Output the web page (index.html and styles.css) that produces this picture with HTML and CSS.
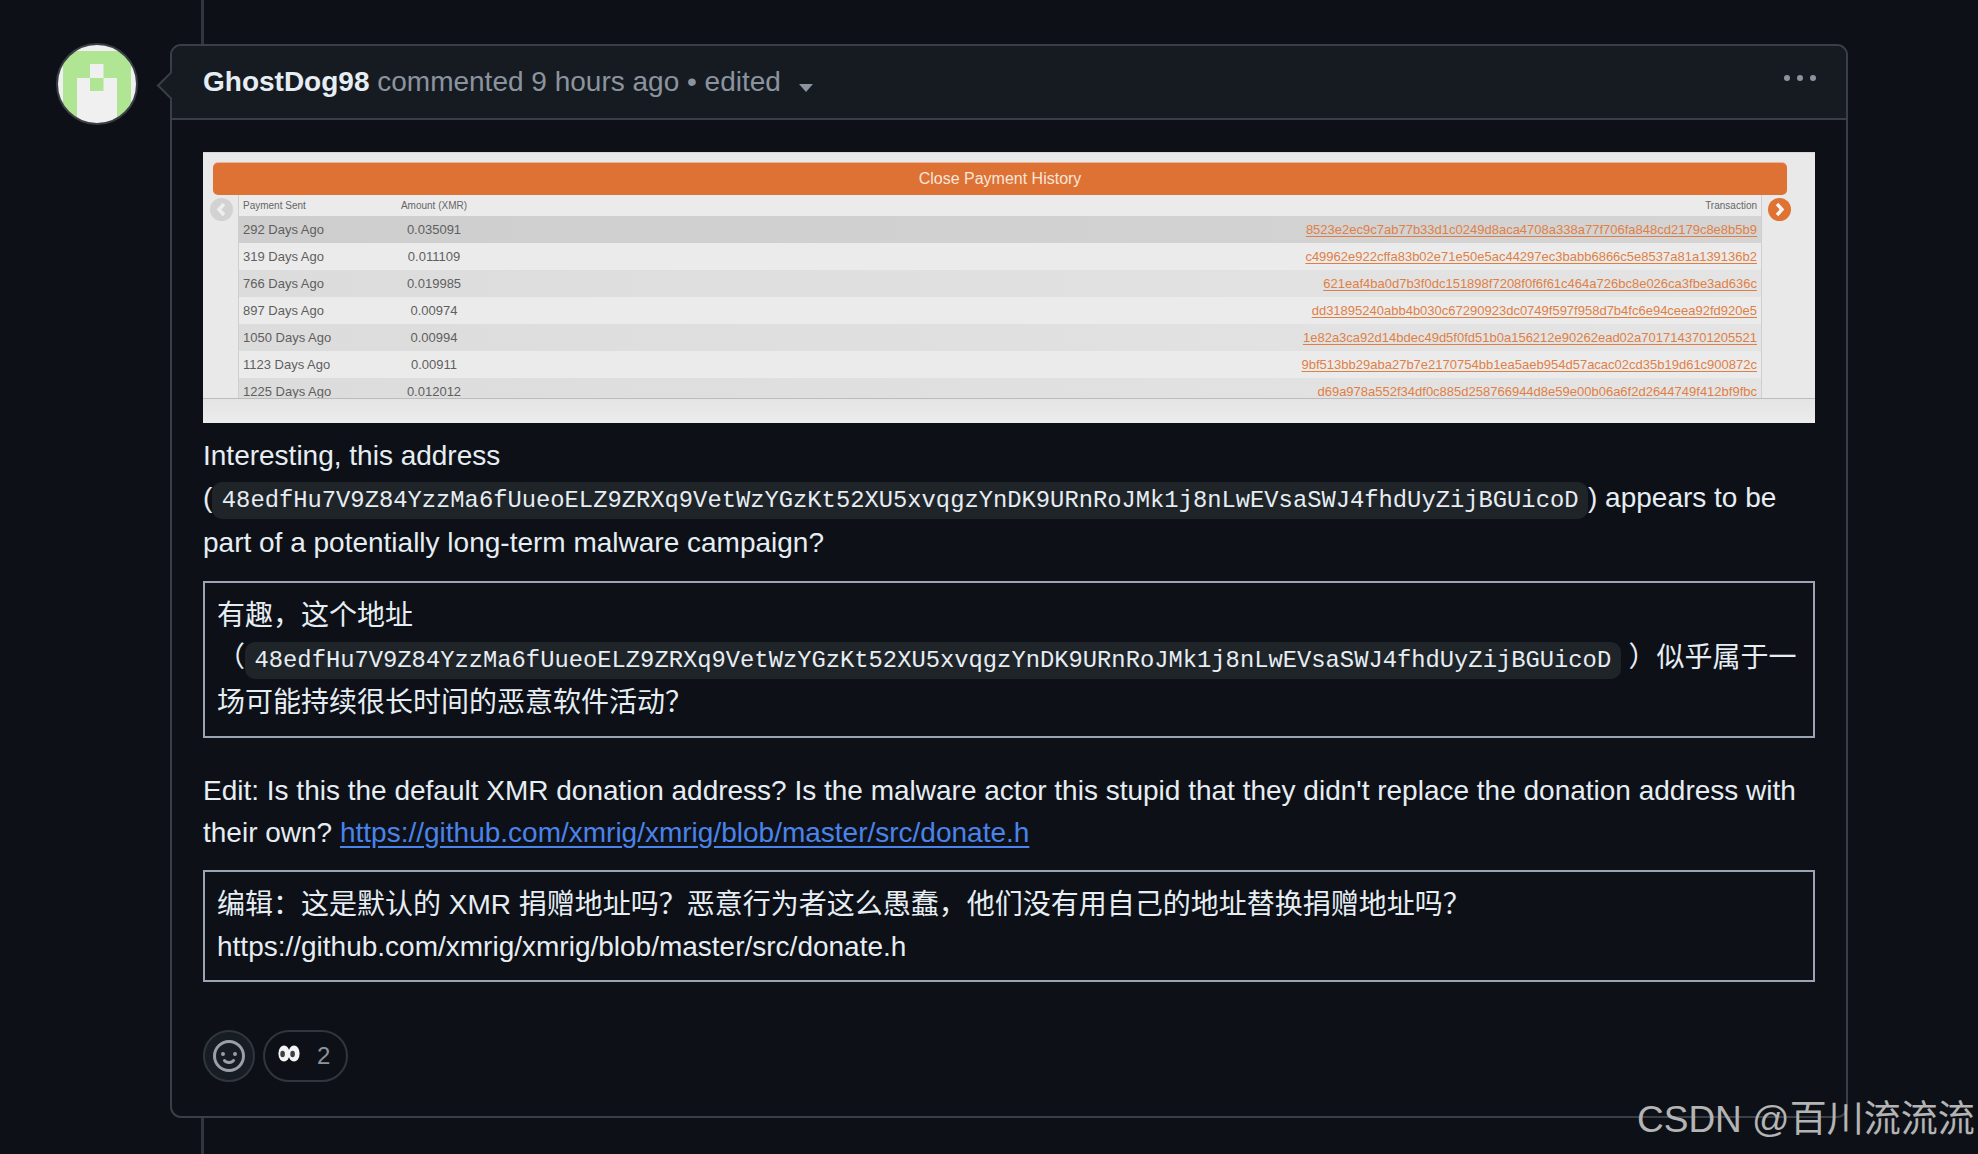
FILE: index.html
```html
<!DOCTYPE html>
<html lang="en">
<head>
<meta charset="utf-8">
<title>Comment</title>
<link rel="stylesheet" href="styles.css">
</head>
<body>
<div class="page">
  <svg class="avatar" viewBox="0 0 82 82" aria-hidden="true">
    <defs><clipPath id="round"><circle cx="41" cy="41" r="40"/></clipPath></defs>
    <g clip-path="url(#round)">
      <rect width="82" height="82" fill="#f0f0f0"/>
      <rect x="7" y="8" width="68" height="74" fill="#b0e594"/>
      <rect x="21" y="35" width="40" height="47" fill="#f0f0f0"/>
      <rect x="34" y="21" width="13.5" height="14" fill="#f0f0f0"/>
      <rect x="34" y="35" width="13.5" height="13" fill="#b0e594"/>
    </g>
    <circle cx="41" cy="41" r="40" fill="none" stroke="#3a3f47" stroke-width="2"/>
  </svg>
  <article class="card">
    <header class="card-head">
      <h3 class="head-text"><strong class="author">GhostDog98</strong> commented 9 hours ago • edited <span class="caret"></span></h3>
      <div class="dots"><i></i><i></i><i></i></div>
    </header>
    <div class="card-body">
      <div class="shot">
        <div class="shot-bar">Close Payment History</div>
        <div class="shot-main">
          <div class="shot-side">
            <svg class="nav" viewBox="0 0 23 23"><circle cx="11.5" cy="11.5" r="11.5" fill="#d2d2d2"/><path d="M14 6l-5 5.500 5 5.500" fill="none" stroke="#efefef" stroke-width="3.400"/></svg>
          </div>
          <div class="shot-table">
            <div class="row row-head"><span>Payment Sent</span><span class="amt">Amount (XMR)</span><span class="tx">Transaction</span></div>
            <div class="row row-a"><span>292 Days Ago</span><span class="amt">0.035091</span><a class="tx">8523e2ec9c7ab77b33d1c0249d8aca4708a338a77f706fa848cd2179c8e8b5b9</a></div>
            <div class="row"><span>319 Days Ago</span><span class="amt">0.011109</span><a class="tx">c49962e922cffa83b02e71e50e5ac44297ec3babb6866c5e8537a81a139136b2</a></div>
            <div class="row row-b"><span>766 Days Ago</span><span class="amt">0.019985</span><a class="tx">621eaf4ba0d7b3f0dc151898f7208f0f6f61c464a726bc8e026ca3fbe3ad636c</a></div>
            <div class="row"><span>897 Days Ago</span><span class="amt">0.00974</span><a class="tx">dd31895240abb4b030c67290923dc0749f597f958d7b4fc6e94ceea92fd920e5</a></div>
            <div class="row row-b"><span>1050 Days Ago</span><span class="amt">0.00994</span><a class="tx">1e82a3ca92d14bdec49d5f0fd51b0a156212e90262ead02a7017143701205521</a></div>
            <div class="row"><span>1123 Days Ago</span><span class="amt">0.00911</span><a class="tx">9bf513bb29aba27b7e2170754bb1ea5aeb954d57acac02cd35b19d61c900872c</a></div>
            <div class="row row-b"><span>1225 Days Ago</span><span class="amt">0.012012</span><a class="tx">d69a978a552f34df0c885d258766944d8e59e00b06a6f2d2644749f412bf9fbc</a></div>
          </div>
          <div class="shot-side shot-side-r">
            <svg class="nav" viewBox="0 0 23 23"><circle cx="11.500" cy="11.500" r="11.500" fill="#e07232"/><path d="M9 6l5 5.500-5 5.500" fill="none" stroke="#f5f5f5" stroke-width="3.400"/></svg>
          </div>
        </div>
        <div class="shot-foot"></div>
      </div>

      <p class="para para-first">Interesting, this address (<code>48edfHu7V9Z84YzzMa6fUueoELZ9ZRXq9VetWzYGzKt52XU5xvqgzYnDK9URnRoJMk1j8nLwEVsaSWJ4fhdUyZijBGUicoD</code>) appears to be part of a potentially long-term malware campaign?</p>
      <div class="tbox" lang="zh-CN">有趣，这个地址（<code>48edfHu7V9Z84YzzMa6fUueoELZ9ZRXq9VetWzYGzKt52XU5xvqgzYnDK9URnRoJMk1j8nLwEVsaSWJ4fhdUyZijBGUicoD</code> ）似乎属于一场可能持续很长时间的恶意软件活动？</div>
      <p class="para para-second">Edit: Is this the default XMR donation address? Is the malware actor this stupid that they didn't replace the donation address with their own? <a class="link" href="#">https://github.com/xmrig/xmrig/blob/master/src/donate.h</a></p>
      <div class="tbox" lang="zh-CN">编辑：这是默认的 XMR 捐赠地址吗？恶意行为者这么愚蠢，他们没有用自己的地址替换捐赠地址吗？<br>https://github.com/xmrig/xmrig/blob/master/src/donate.h</div>

      <div class="reactions">
        <button class="react-add" aria-label="Add reaction">
          <svg class="smile" viewBox="0 0 16 16"><path d="M8 0a8 8 0 1 1 0 16A8 8 0 0 1 8 0ZM1.500 8a6.500 6.500 0 1 0 13 0 6.500 6.500 0 0 0-13 0Zm3.820 1.636a.75.75 0 0 1 1.038.175l.007.009c.103.118.22.222.35.31.264.178.683.37 1.285.37.602 0 1.020-.192 1.285-.371.13-.088.247-.192.35-.31l.007-.008a.75.75 0 0 1 1.222.87l-.022-.015c.02.013.021.015.021.015v.001l-.001.002-.002.003-.005.007-.014.019a2.066 2.066 0 0 1-.184.213c-.16.166-.338.316-.53.445-.63.418-1.370.638-2.127.629-.946 0-1.652-.308-2.126-.63a3.331 3.331 0 0 1-.715-.657l-.014-.02-.005-.006-.002-.003v-.002h-.001l.613-.432-.614.43a.75.75 0 0 1 .183-1.044ZM12 7a1 1 0 1 1-2 0 1 1 0 0 1 2 0ZM5 8a1 1 0 1 1 0-2 1 1 0 0 1 0 2Z"/></svg>
        </button>
        <button class="react-pill">
          <svg class="eyes" viewBox="0 0 22 17"><ellipse cx="6" cy="8.500" rx="5.600" ry="8" fill="#f4f4f4"/><ellipse cx="16" cy="8.500" rx="5.600" ry="8" fill="#f4f4f4"/><ellipse cx="4.600" cy="9" rx="2.300" ry="3.300" fill="#3c3f44"/><ellipse cx="14.600" cy="9" rx="2.300" ry="3.300" fill="#3c3f44"/></svg>
          <span class="count">2</span>
        </button>
      </div>
    </div>
  </article>
  <div class="watermark" lang="zh-CN">CSDN @百川流流流</div>
</div>
</body>
</html>
```
FILE: styles.css
```css
* { box-sizing: border-box; }
html, body { margin: 0; padding: 0; }
body {
  background: #0d1117;
  color: #e6edf3;
  font-family: "Liberation Sans", "Noto Sans CJK SC", sans-serif;
  font-size: 28px;
  line-height: 42px;
}
.page {
  position: relative;
  height: 1154px;
  overflow: hidden;
  display: flex;
  align-items: flex-start;
  padding: 43px 0 0 56px;
}
.page::before {
  content: "";
  position: absolute;
  left: 201px;
  top: 0;
  bottom: 0;
  width: 3px;
  background: #30363d;
}
.avatar { width: 82px; height: 82px; flex: none; }
.card {
  position: relative;
  width: 1678px;
  margin: 1px 0 0 32px;
  background: #0d1117;
  border: 2px solid #3a3f47;
  border-radius: 11px;
}
.card::before {
  content: "";
  position: absolute;
  left: -11px;
  top: 29px;
  width: 19px;
  height: 19px;
  background: #161b22;
  border-left: 2px solid #3a3f47;
  border-bottom: 2px solid #3a3f47;
  transform: rotate(45deg);
}
.card-head {
  position: relative;
  height: 74px;
  padding: 0 31px;
  display: flex;
  align-items: center;
  justify-content: space-between;
  background: #161b22;
  border-bottom: 2px solid #3a3f47;
  border-radius: 9px 9px 0 0;
}
.head-text {
  margin: 0;
  font-size: 28px;
  font-weight: 400;
  color: #8b949e;
  white-space: nowrap;
}
.author { font-weight: 700; color: #e6edf3; }
.caret {
  display: inline-block;
  margin-left: 10px;
  vertical-align: -1px;
  border-top: 8px solid #8b949e;
  border-left: 7px solid transparent;
  border-right: 7px solid transparent;
}
.dots { display: flex; gap: 6.500px; margin: -8px -1px 0 0; }
.dots i { width: 6.500px; height: 6.500px; border-radius: 50%; background: #8b949e; }
.card-body { padding: 32px 31px 34px; }

.shot {
  height: 271px;
  background: #e9e9e9;
  padding-top: 11px;
  display: flex;
  flex-direction: column;
  font-size: 13px;
  line-height: 16px;
  color: #5f5f5f;
  box-shadow: inset 0 1px 0 #d8d8d8;
}
.shot-bar {
  height: 32px;
  margin: 0 28px 0 10px;
  border-radius: 5px;
  background: #de7234;
  box-shadow: 0 -1px 0 #e8b598;
  color: #f7e6dc;
  font-family: "Liberation Sans Narrow", "Liberation Sans", sans-serif;
  font-size: 16px;
  line-height: 32px;
  text-align: center;
}
.shot-main { height: 203px; display: flex; }
.shot-side {
  width: 35px;
  padding: 3px 0 0 7px;
  flex: none;
}
.shot-side-r { width: 53px; padding-left: 6px; }
.nav { display: block; width: 23px; height: 23px; }
.shot-table {
  flex: 1;
  overflow: hidden;
  border-left: 1px solid #cfcfcf;
  border-right: 1px solid #cfcfcf;
}
.row {
  height: 27px;
  display: grid;
  grid-template-columns: 149px 84px 1fr;
  align-items: center;
  padding: 0 4px 0 4px;
  background: #ebebeb;
  white-space: nowrap;
}
.row-head { height: 21px; font-size: 10px; color: #666; }
.row-a { background: linear-gradient(90deg, #cecece, #d4d4d4); }
.row-b { background: linear-gradient(90deg, #dcdcdc, #e4e4e4); }
.amt { text-align: center; }
.tx { text-align: right; }
a.tx { color: #e07f45; text-decoration: underline; text-underline-offset: 2px; }
.shot-foot {
  flex: 1;
  border-top: 1px solid #bdbdbd;
  background: linear-gradient(#e4e4e4, #ececec);
}

.para { margin: 0; }
.para-first { margin: 12px 0 17px; }
.para-second { margin: 32px 0 16px; }
code {
  font-family: "Liberation Mono", monospace;
  font-size: 23.800px;
  padding: 4.760px 9.520px;
  background: #1f2429;
  border-radius: 10px;
}
.tbox {
  border: 2px solid #9ba4b5;
  padding: 12px;
}
.link { color: #4a83ea; text-decoration: underline; text-underline-offset: 4px; }

.reactions { display: flex; gap: 8px; margin-top: 48px; }
.react-add, .react-pill {
  height: 52px;
  padding: 0;
  font: inherit;
  border: 2px solid #30363d;
  border-radius: 26px;
  display: flex;
  align-items: center;
}
.react-add {
  width: 52px;
  justify-content: center;
  background: #181c23;
}
.smile { width: 32px; height: 32px; fill: #9aa0a8; }
.react-pill {
  width: 85px;
  padding-left: 13px;
  background: transparent;
}
.eyes { width: 22px; height: 17px; margin-top: -5px; }
.count {
  margin-left: 17px;
  font-size: 24px;
  color: #8b949e;
}
.watermark {
  position: absolute;
  left: 1637px;
  top: 1098px;
  font-size: 37px;
  line-height: 44px;
  color: #b4b4b4;
  white-space: nowrap;
}
```
